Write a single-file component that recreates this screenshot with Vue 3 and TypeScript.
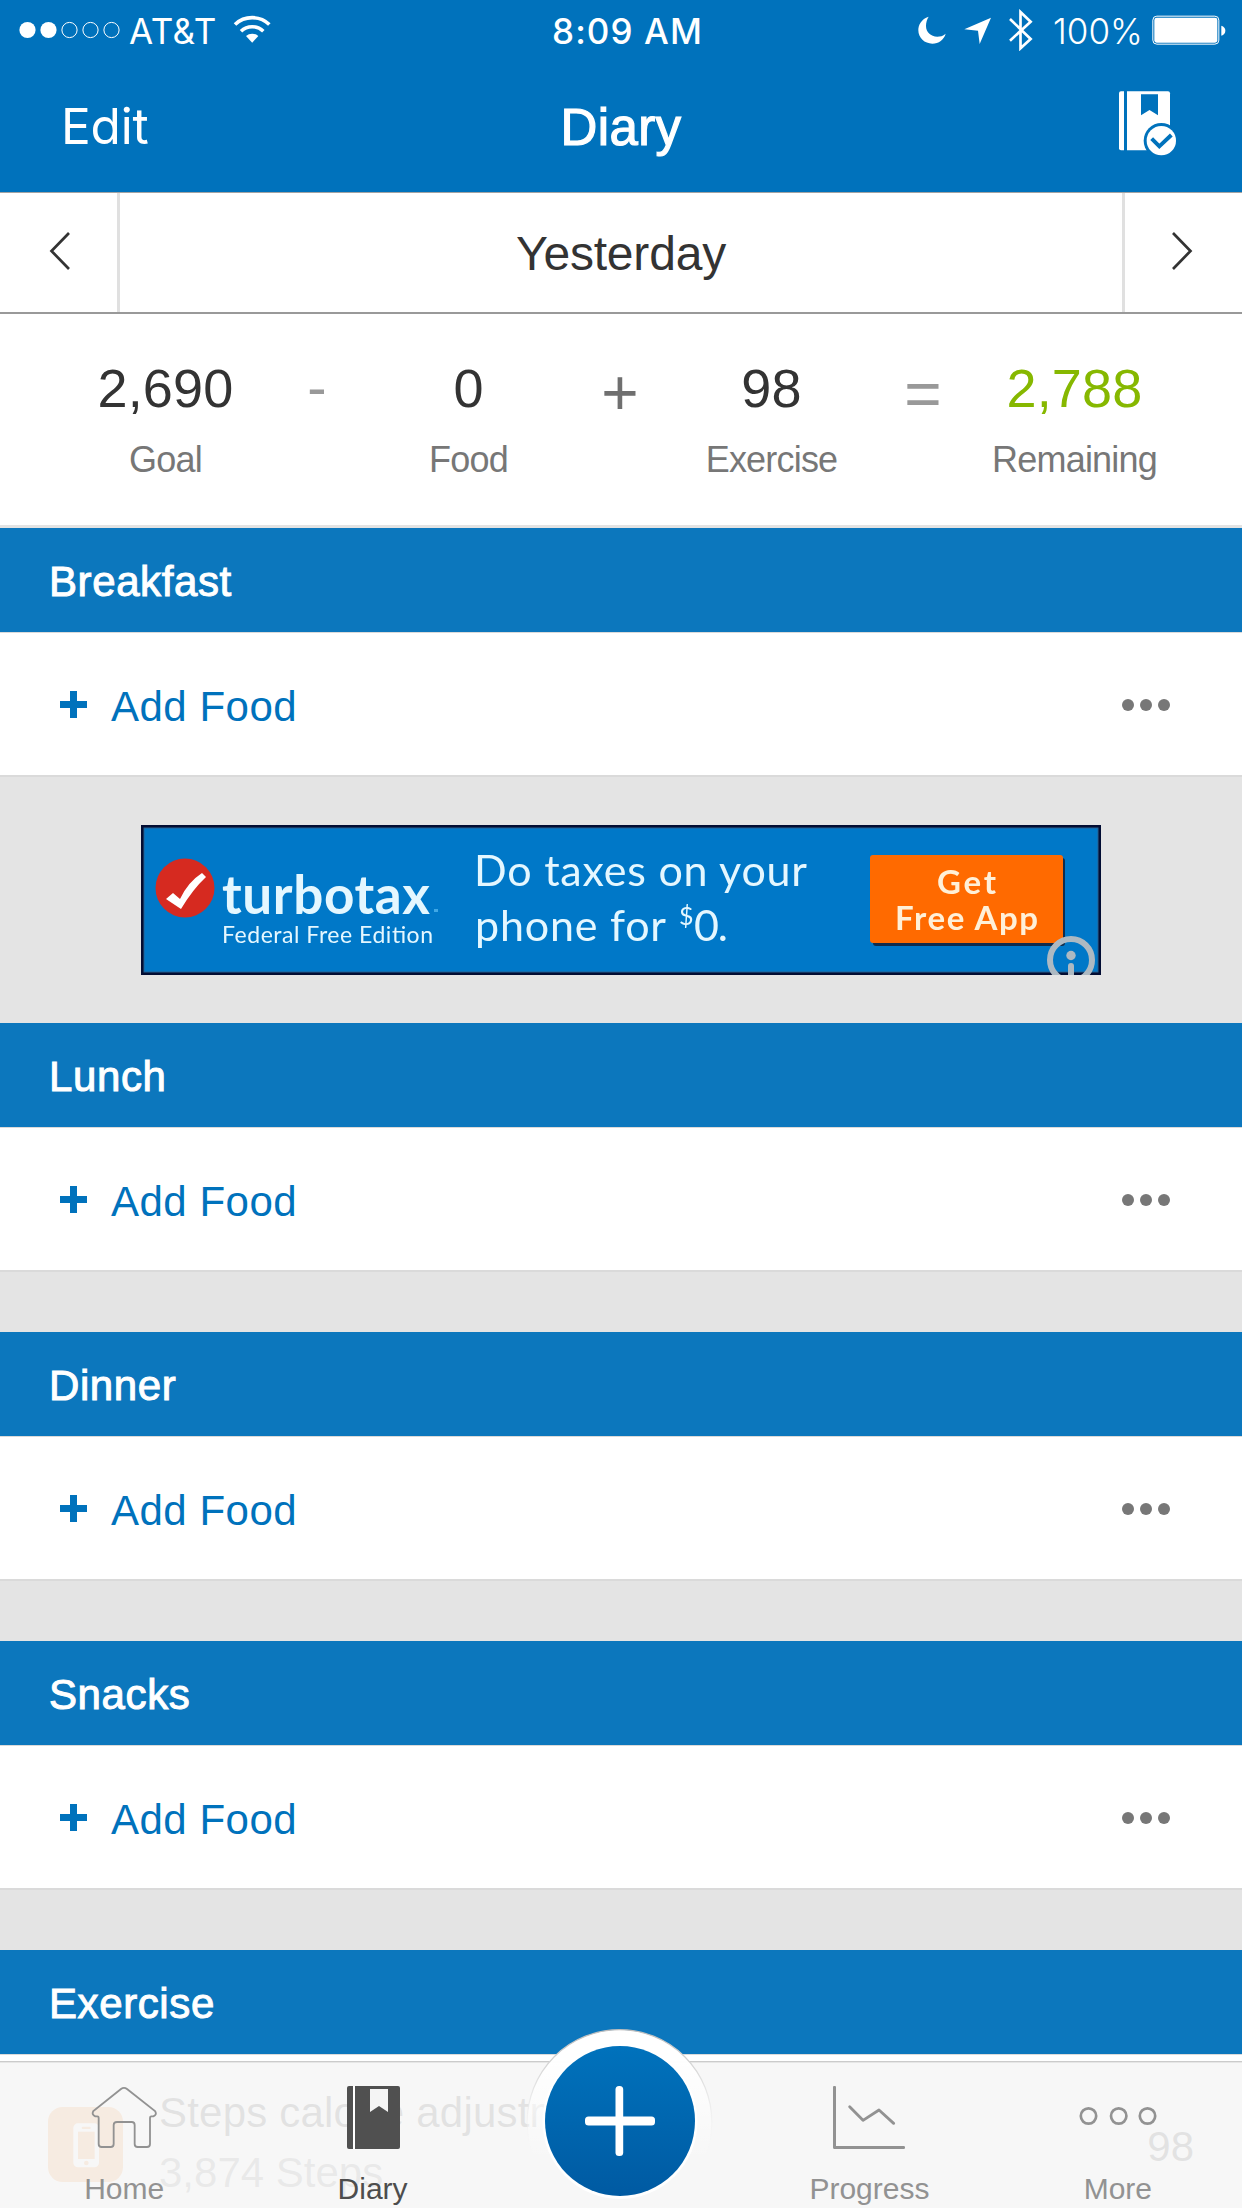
<script setup lang="ts">
interface Meal {
  name: string
  ad?: boolean
}

interface Total {
  value: string
  label: string
  operator?: string
  kind?: string
  remaining?: boolean
}

const meals: Meal[] = [
  { name: 'Breakfast', ad: true },
  { name: 'Lunch' },
  { name: 'Dinner' },
  { name: 'Snacks' },
]

const totals: Total[] = [
  { value: '2,690', label: 'Goal', operator: '-', kind: 'minus' },
  { value: '0', label: 'Food', operator: '+', kind: 'plus' },
  { value: '98', label: 'Exercise', operator: '=', kind: 'equals' },
  { value: '2,788', label: 'Remaining', remaining: true },
]
</script>

<template>
  <div class="screen">
    <header class="top">
      <div class="status">
        <div class="status-left">
          <svg class="signal" width="101" height="18" viewBox="0 0 101 18">
            <circle cx="8.5" cy="9" r="8.1" fill="#fff" />
            <circle cx="29.5" cy="9" r="8.1" fill="#fff" />
            <g fill="none" stroke="#fff" stroke-width="1">
              <circle cx="50.5" cy="9" r="7.6" />
              <circle cx="71.5" cy="9" r="7.6" />
              <circle cx="92.5" cy="9" r="7.6" />
            </g>
          </svg>
          <span class="carrier">AT&amp;T</span>
          <svg class="wifi" width="38" height="28" viewBox="700 46 114 84" fill="none" stroke="#fff">
            <path d="M706 74.5A75 75 0 0 1 809 74.5" stroke-width="11" />
            <path d="M724 94.5A48 48 0 0 1 791 94.5" stroke-width="10.5" />
            <path d="M757.500 129L739 109A28 28 0 0 1 776 109Z" fill="#fff" stroke="none" />
          </svg>
        </div>
        <span class="time">8:09 AM</span>
        <div class="status-right">
          <svg class="moon" width="28" height="28" viewBox="112 49 84 84" fill="#fff">
            <path d="M144 51C122 58 113 76 113 92C113 115 132 132 155 132C174 132 190 120 195 102C187 109 178 111 170 111C150 111 136 97 136 79C136 68 139 58 144 51Z" />
          </svg>
          <svg class="location" width="28" height="28" viewBox="249 52 84 84" fill="#fff">
            <path d="M330 54L250 89L291 93L296 133Z" />
          </svg>
          <svg class="bluetooth" width="24" height="42" viewBox="383 28 72 126" fill="none" stroke="#fff" stroke-width="8">
            <path d="M386 58L448 118L417.500 146V37L448 66L386 123" />
          </svg>
          <span class="percent">100%</span>
          <svg class="battery" width="74" height="30" viewBox="815 46 222 90" fill="#fff">
            <rect x="817.5" y="49.500" width="198" height="84" rx="12" fill="none" stroke="#fff" stroke-width="3" />
            <rect x="822" y="54" width="189" height="75" rx="7" />
            <path d="M1023 78Q1035 82 1035 93Q1035 104 1023 108Z" />
          </svg>
        </div>
      </div>
      <div class="nav">
        <span class="edit">Edit</span>
        <h1>Diary</h1>
        <svg class="book" width="58" height="65" viewBox="717 272 174 195" fill="#fff">
          <path d="M732 273H723Q717 273 717 279V444Q717 450 723 450H732Z" />
          <path d="M741 273H864Q870 273 870 279V450H741Z" />
          <path d="M783 282H834V345L808.500 329L783 345Z" fill="#0072bc" />
          <circle cx="844" cy="421" r="53" fill="#0072bc" />
          <circle cx="844" cy="421" r="44" />
          <path d="M815 415L838 438L874 404" fill="none" stroke="#0072bc" stroke-width="12" />
        </svg>
      </div>
    </header>

    <div class="date">
      <div class="step prev">
        <svg width="22" height="40" viewBox="0 0 22 40" fill="none" stroke="#333" stroke-width="2.700">
          <path d="M20 2L2.500 20L20 38" />
        </svg>
      </div>
      <div class="day">Yesterday</div>
      <div class="step next">
        <svg width="22" height="40" viewBox="0 0 22 40" fill="none" stroke="#333" stroke-width="2.700">
          <path d="M2 2L19.500 20L2 38" />
        </svg>
      </div>
    </div>

    <div class="summary">
      <template v-for="t in totals" :key="t.label">
        <div class="total" :class="{ remaining: t.remaining }">
          <div class="value">{{ t.value }}</div>
          <div class="label">{{ t.label }}</div>
        </div>
        <div v-if="t.operator" class="operator" :class="t.kind"><span>{{ t.operator }}</span></div>
      </template>
    </div>

    <section v-for="m in meals" :key="m.name">
      <h2>{{ m.name }}</h2>
      <div class="add-row">
        <svg width="27" height="27" viewBox="0 0 27 27" fill="#0072bc">
          <path d="M10 0h7v10h10v7H17v10h-7V17H0v-7h10z" />
        </svg>
        <span class="add">Add Food</span>
        <svg class="dots" width="48" height="12" viewBox="0 0 48 12" fill="#777">
          <circle cx="6" cy="6" r="6" />
          <circle cx="24" cy="6" r="6" />
          <circle cx="42" cy="6" r="6" />
        </svg>
      </div>
      <div class="gap" :class="{ 'with-ad': m.ad }">
        <svg v-if="m.ad" class="ad" width="960" height="150" viewBox="141 825 960 150">
          <rect x="141" y="825" width="960" height="150" fill="#020d33" />
          <rect x="144" y="828" width="954" height="144" fill="#0078c8" stroke="#28618f" stroke-width="1" />
          <g class="soft">
            <circle cx="185" cy="888" r="29.500" fill="#d62a20" />
            <path d="M166 899L173 893L180 899Q188 882 202 873L206 877Q193 889 181 909Z" fill="#fff" />
            <g fill="#e4f7ff">
              <text x="222" y="913.500" class="brand" textLength="208">turbotax</text>
              <rect x="434" y="909" width="4" height="3" fill="#3fa8e6" />
              <text x="222" y="943" class="edition" textLength="211">Federal Free Edition</text>
              <g class="pitch">
                <text x="474" y="885.500" textLength="333">Do taxes on your</text>
                <text x="475" y="941" textLength="191">phone for</text>
                <text x="679" y="925" class="dollar">$</text>
                <text x="694" y="941" textLength="34">0.</text>
              </g>
            </g>
            <rect x="873" y="858" width="192" height="88" rx="3" fill="#102c4c" />
            <rect x="870" y="855" width="193" height="88" rx="3" fill="#ff6a00" />
            <g class="cta" fill="#fff0d8">
              <text x="937" y="894" textLength="59">Get</text>
              <text x="895" y="929.500" textLength="143">Free App</text>
            </g>
          </g>
          <g fill="#adb9c2">
            <circle cx="1071" cy="960" r="21" fill="none" stroke="#adb9c2" stroke-width="6" />
            <circle cx="1071" cy="955.500" r="4.700" />
            <rect x="1068" y="963" width="6" height="20" rx="3" />
          </g>
        </svg>
      </div>
    </section>

    <section>
      <h2>Exercise</h2>
      <div class="activity">
        <svg class="phone" width="75" height="75" viewBox="0 0 225 225">
          <rect width="225" height="225" rx="44" fill="#f58a29" />
          <rect x="76" y="49" width="77" height="132" rx="14" fill="#fff" />
          <rect x="90" y="74" width="50" height="82" fill="#f58a29" />
          <rect x="101" y="59" width="27" height="7" rx="3" fill="#f58a29" />
          <circle cx="115" cy="168" r="7" fill="#f58a29" />
        </svg>
        <div class="activity-text">
          <div class="activity-name">Steps calorie adjustment</div>
          <div class="activity-steps">3,874 Steps</div>
        </div>
        <div class="activity-value">98</div>
      </div>
    </section>

    <nav class="tabs">
      <div class="tab">
        <svg width="66" height="63" viewBox="271 438 198 189" fill="none" stroke="#929292" stroke-width="5.500">
          <path d="M361 447Q370 440 379 447L463 513Q470 524 458 529H452Q448 529 448 533V612Q448 621 439 621H411Q402 621 402 612V555Q402 546 393 546H349Q339 546 339 555V612Q339 621 330 621H303Q294 621 294 612V533Q294 529 290 529H284Q272 524 278 513Z" />
        </svg>
        <span>Home</span>
      </div>
      <div class="tab active">
        <svg width="53" height="63" viewBox="1041 438 159 189" fill="#505050">
          <path d="M1059 438H1047Q1041 438 1041 444V621Q1041 627 1047 627H1059Z" />
          <path d="M1065 438H1194Q1200 438 1200 444V621Q1200 627 1194 627H1065Z" />
          <rect x="1059" y="438" width="6" height="189" fill="#fff" />
          <path d="M1110 447H1164V516L1137 498L1110 516Z" fill="#f4f4f4" />
        </svg>
        <span>Diary</span>
      </div>
      <div class="tab"></div>
      <div class="tab">
        <svg width="72" height="63" viewBox="159 198 216 189" fill="none" stroke="#929292" stroke-width="9" stroke-linecap="round" stroke-linejoin="round">
          <path d="M163.500 202V382.500H371" />
          <path d="M209 260L249 301L297 270L341 310" stroke-width="8.500" />
        </svg>
        <span>Progress</span>
      </div>
      <div class="tab">
        <svg width="78" height="63" viewBox="0 0 78 63" fill="none" stroke="#929292" stroke-width="2.700">
          <circle cx="9.500" cy="30" r="7.700" />
          <circle cx="39.700" cy="30" r="7.700" />
          <circle cx="68.500" cy="30" r="7.700" />
        </svg>
        <span>More</span>
      </div>
      <svg class="fab" width="190" height="180" viewBox="525 2028 190 180">
        <defs>
          <linearGradient id="ring" gradientUnits="userSpaceOnUse" x1="0" y1="2060" x2="0" y2="2160">
            <stop offset="0" stop-color="#fff" />
            <stop offset="1" stop-color="#fff" stop-opacity="0" />
          </linearGradient>
          <linearGradient id="edge" gradientUnits="userSpaceOnUse" x1="0" y1="2030" x2="0" y2="2150">
            <stop offset="0" stop-color="#bdbdbd" />
            <stop offset="0.400" stop-color="#dedede" />
            <stop offset="1" stop-color="#f4f4f4" stop-opacity="0" />
          </linearGradient>
          <linearGradient id="button" x1="0" y1="0" x2="0" y2="1">
            <stop offset="0" stop-color="#0072bc" />
            <stop offset="1" stop-color="#005aa2" />
          </linearGradient>
        </defs>
        <circle cx="619.500" cy="2122" r="92.300" fill="url(#ring)" stroke="url(#edge)" stroke-width="1.200" />
        <circle cx="620" cy="2121.500" r="77.500" fill="#fff" />
        <circle cx="620" cy="2121" r="75" fill="url(#button)" />
        <rect x="585" y="2116.500" width="70" height="9" rx="3.500" fill="#fff" />
        <rect x="615.500" y="2086" width="7.700" height="70" rx="3.500" fill="#fff" />
      </svg>
    </nav>
  </div>
</template>

<style>
body {
  margin: 0;
  overflow: hidden;
}
</style>

<style scoped>
.screen {
  position: relative;
  width: 1242px;
  height: 2208px;
  overflow: hidden;
  background: #fff;
  font-family: "Liberation Sans", Arial, sans-serif;
  color: #333;
}
.top {
  height: 192px;
  background: #0072bc;
  border-bottom: 1px solid #a3a3a3;
  color: #fff;
  font-family: Inter, sans-serif;
}
.status {
  display: grid;
  grid-template-columns: 1fr 160px 1fr;
  height: 62px;
  font-size: 35px;
  line-height: 62px;
}
.status-left,
.status-right {
  display: flex;
  align-items: flex-start;
}
.status-left {
  padding-left: 19px;
}
.status-right {
  justify-content: flex-end;
  padding-right: 16px;
}
svg {
  display: block;
  flex: none;
}
.signal {
  margin-top: 21px;
}
.carrier {
  width: 104px;
  margin-left: 9px;
  font-weight: 400;
  letter-spacing: 0.5px;
}
.wifi {
  margin-top: 15px;
}
.time {
  text-align: center;
  white-space: nowrap;
  font-weight: 500;
  letter-spacing: 1.1px;
  margin-left: 11px;
}
.moon {
  margin: 16px 18px 0 0;
}
.location {
  margin: 17px 17px 0 0;
}
.bluetooth {
  margin: 9px 20px 0 0;
}
.percent {
  width: 99px;
  font-weight: 350;
  letter-spacing: 0;
}
.battery {
  margin-top: 15px;
}
.nav {
  display: grid;
  grid-template-columns: 1fr auto 1fr;
  height: 130px;
  line-height: 129px;
}
.edit {
  padding-left: 61px;
  font-size: 49.5px;
  letter-spacing: -0.2px;
}
h1 {
  margin: 0;
  font: 400 51px/131px "Liberation Sans", Arial, sans-serif;
  letter-spacing: 0.4px;
  -webkit-text-stroke: 1.2px #fff;
}
.book {
  justify-self: end;
  margin: 29px 65px 0 0;
}
.date {
  display: flex;
  height: 119px;
  border-bottom: 2px solid #999;
}
.step {
  width: 120px;
  display: flex;
  align-items: center;
  justify-content: center;
  padding-bottom: 3px;
  box-sizing: border-box;
}
.prev {
  padding-left: 2px;
  border-right: 3px solid #e0e0e0;
}
.next {
  padding-right: 3px;
  border-left: 3px solid #e0e0e0;
}
.day {
  flex: 1;
  text-align: center;
  font-size: 48px;
  line-height: 121px;
  letter-spacing: -0.2px;
}
.summary {
  display: flex;
  justify-content: center;
  height: 211px;
  padding-right: 2px;
  border-bottom: 3px solid #e3e3e3;
}
.total {
  width: 203px;
  text-align: center;
}
.value {
  margin-top: 43px;
  font-size: 54px;
  line-height: 62px;
  letter-spacing: 0.2px;
}
.label {
  margin-top: 20px;
  font-size: 36px;
  line-height: 42px;
  letter-spacing: -0.8px;
  color: #777;
}
.remaining .value {
  color: #86b800;
}
.operator {
  width: 100px;
  text-align: center;
  font-size: 64px;
  line-height: 74px;
  padding-top: 43px;
  color: #999;
}
.plus {
  padding-top: 42px;
  color: #6f6f6f;
}
.minus {
  padding-top: 36px;
  font-size: 58px;
}
h2 {
  margin: 0;
  height: 104px;
  padding-left: 49px;
  background: #0c77bd;
  color: #fff;
  font-size: 42px;
  font-weight: 400;
  line-height: 108px;
  letter-spacing: 0.6px;
  -webkit-text-stroke: 1px #fff;
}
.add-row {
  display: flex;
  align-items: center;
  height: 142px;
  padding: 0 72px 0 60px;
  border-top: 1px solid #dadada;
  border-bottom: 2px solid #dadada;
}
.add {
  flex: 1;
  margin-left: 24px;
  padding-top: 5px;
  font-size: 42px;
  line-height: 48px;
  letter-spacing: 0.5px;
  color: #0072bc;
}
.dots {
  margin-top: 2px;
}
.gap {
  height: 60px;
  background: #e4e4e4;
}
.with-ad {
  display: flex;
  align-items: center;
  justify-content: center;
  height: 246px;
}
.ad {
  font-family: Lato, sans-serif;
}
.soft {
  filter: blur(0.7px);
}
.brand {
  font-size: 53px;
  font-weight: 700;
}
.edition {
  font-size: 23px;
}
.pitch {
  font-size: 43px;
}
.dollar {
  font-size: 25px;
}
.cta {
  font-size: 33px;
  font-weight: 700;
}
.activity {
  display: flex;
  height: 200px;
  padding: 0 48px;
  border-top: 1px solid #dadada;
}
.phone {
  margin-top: 52px;
}
.activity-text {
  margin: 28px 0 0 36px;
  font-size: 42px;
  line-height: 60px;
  flex: 1;
}
.activity-name {
  letter-spacing: 0.2px;
}
.activity-steps {
  color: #777;
}
.activity-value {
  margin-top: 62px;
  font-size: 42px;
  line-height: 60px;
}
.tabs {
  position: absolute;
  left: 0;
  right: 0;
  bottom: 0;
  display: flex;
  height: 147px;
  background: rgba(246, 246, 246, 0.897);
  box-shadow: inset 0 1px #cbcbcb, inset 0 2px #e6e6e6;
}
.tab {
  flex: 1;
  display: flex;
  flex-direction: column;
  align-items: center;
  padding-top: 25px;
  color: #929292;
  font-size: 30px;
  line-height: 34px;
}
.tab span {
  margin-top: 23px;
}
.active {
  color: #4d4d4d;
}
.active svg {
  margin-left: 2px;
}
.fab {
  position: absolute;
  left: 525px;
  bottom: 0;
}
</style>
